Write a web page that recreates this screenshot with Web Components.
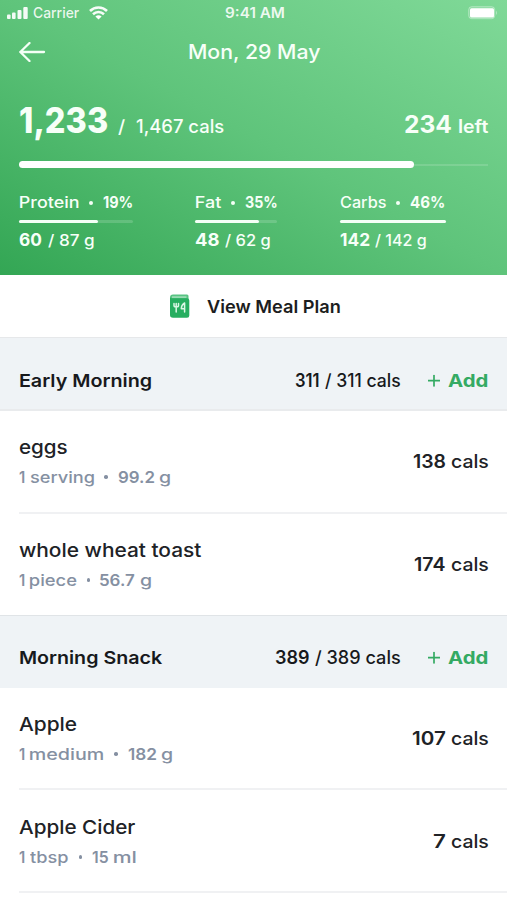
<!DOCTYPE html>
<html lang="en">
<head>
<meta charset="utf-8">
<title>Meal diary</title>
<style>
html,body{margin:0;padding:0;background:#fff}
body{width:507px;height:900px;overflow:hidden;font-family:Inter,"Liberation Sans",sans-serif;color:#17191c}
</style>
</head>
<body>
<diary-app></diary-app>
<script>
const define = (name, html, setup) => customElements.define(name, class extends HTMLElement {
  connectedCallback() {
    if (this.shadowRoot) return;
    const root = this.attachShadow({mode: 'open'});
    root.innerHTML = html(this);
    if (setup) setup(this, root);
  }
});
const a = (el, n, d = '') => el.getAttribute(n) ?? d;

/* One run of text, stretched so that its ink spans w pixels. g is the gap before it. */
const pen = document.createElement('canvas').getContext('2d');
define('fit-text', el => `<style>
:host{display:inline-block;flex:none;white-space:nowrap;width:${a(el,'w')}px;margin-left:${a(el,'g','0')}px;font-size:${a(el,'s','16')}px;font-weight:${a(el,'b','500')}}
span{display:inline-block;transform-origin:0 50%}
</style><span>${a(el,'t')}</span>`, (el, root) => {
  const c = getComputedStyle(el);
  pen.font = `${c.fontWeight} ${c.fontSize} ${c.fontFamily}`;
  const m = pen.measureText(a(el, 't'));
  const k = +a(el, 'w') / (m.actualBoundingBoxRight + m.actualBoundingBoxLeft);
  root.querySelector('span').style.transform = `scaleX(${k}) translateX(${m.actualBoundingBoxLeft}px)`;
});
const T = (t, w, s, b, g = 0) => `<fit-text t="${t}" w="${w}" s="${s}" b="${b}" g="${g}"></fit-text>`;

define('status-bar', () => `<style>
:host{display:grid;grid-template-columns:1fr auto 1fr;height:26px;line-height:26px;padding:0 9px 0 7px;align-items:center;color:rgba(255,255,255,.88)}
div{display:flex;align-items:center;height:26px}
.r{justify-content:flex-end}
svg{display:block;flex:none}
</style>
<div><svg width="21" height="12" viewBox="0 0 21 12" fill="#fff" fill-opacity=".93"><rect y="7.5" width="3.6" height="4.5" rx="1"/><rect x="5" y="5.5" width="3.6" height="6.5" rx="1"/><rect x="10.500" y="3" width="4" height="9" rx="1"/><rect x="16.300" y="0" width="4.4" height="12" rx="1"/></svg>
${T('Carrier',46.5,14.6,450,5)}
<svg style="margin-left:9px" width="19" height="14" viewBox="0 0 19 14" fill="none" stroke="#fff" stroke-opacity=".94" stroke-width="2.6"><path d="M1 5C5.7.4 13.300.4 18 5M4 8.300C7.200 5.300 11.800 5.300 15 8.300"/><path d="M9.500 13.600L6.400 10.500Q9.500 8 12.600 10.500Z" fill="#fff" stroke="none"/></svg></div>
${T('9:41 AM',59,14,600,3)}
<div class="r"><svg width="30" height="14" viewBox="0 0 30 14"><rect x=".7" y=".7" width="26" height="12" rx="3" fill="#fff" fill-opacity=".12" stroke="#fff" stroke-opacity=".36"/><rect x="2" y="2.200" width="24" height="9.200" rx="1.500" fill="#fff"/><path d="M28 4.500Q30 7 28 9Z" fill="#fff" fill-opacity=".4"/></svg></div>`);

define('macro-stat', el => {
  const [lt,lw,pt,pw,vt,vw,ut,uw,bar] = a(el,'data').split('|');
  return `<style>
:host{display:block;width:${a(el,'width')}px}
.l{display:flex;align-items:baseline;height:24px;line-height:24px}
.b{height:3px;margin:5px 0 5px;background:rgba(255,255,255,.16);border-radius:2px}
.b i{display:block;height:3px;border-radius:2px;background:#f4fff6;width:${bar}px}
.dot{flex:none;width:4px;height:4px;border-radius:50%;background:#f4fff6;margin:0 10px;align-self:center}
</style><div class="l">${T(lt,lw,15.6,500,a(el,'nudge','0'))}<span class="dot"></span>${T(pt,pw,15.6,700)}</div>
<div class="b"><i></i></div>
<div class="l">${T(vt,vw,17.6,700)}${T(ut,uw,15.6,500,5.5)}</div>`;
});

define('summary-header', () => `<style>
:host{display:block;height:275px;box-sizing:border-box;background:linear-gradient(to top right,#33a654,#5fc47b 50%,#80d998);color:#f7fff8}
nav{display:grid;grid-template-columns:1fr auto 1fr;height:52px;align-items:center;padding:0 19px;line-height:52px}
nav svg{display:block}
.t{display:flex;align-items:baseline;height:52px;line-height:52px;padding:17px 18.500px 0 19.700px}
.sp{flex:1}
.bar{display:flex;align-items:center;height:7px;margin:14px 19px 0}
.bar b{width:395px;height:7px;border-radius:4px;background:#fff}
.bar i{flex:1;height:2px;background:rgba(255,255,255,.14)}
.m{display:grid;grid-template-columns:176px 144.500px auto;padding:23px 19px 0}
</style>
<status-bar></status-bar>
<nav><svg width="27" height="20" viewBox="0 0 27 20" fill="none" stroke="#f4fff6" stroke-width="2.300" stroke-linecap="round" stroke-linejoin="round"><path d="M10.500 1L1.300 10l9.200 9M1.300 10H25"/></svg>${T('Mon, 29 May',132,20.3,500,2.6)}<span></span></nav>
<div class="t">${T('1,233',87,35.5,800)}${T('/',7.5,18,500,11.3)}${T('1,467 cals',87.5,18,500,10.5)}<span class="sp"></span>${T('234',46,23.6,700)}${T('left',30,18,600,8)}</div>
<div class="bar"><b></b><i></i></div>
<div class="m">
<macro-stat width="114" nudge="1" data="Protein|59|19%|29.500|60|23|/ 87 g|46|79"></macro-stat>
<macro-stat width="82" nudge="1" data="Fat|25|35%|32|48|24|/ 62 g|45|64"></macro-stat>
<macro-stat width="106" data="Carbs|46|46%|34.500|142|30|/ 142 g|51|106"></macro-stat>
</div>`);

define('meal-plan-link', () => `<style>
:host{display:flex;height:63px;box-sizing:border-box;padding-left:170px;align-items:center;border-bottom:1px solid #e6e8ea;background:#fff;line-height:32px;color:#1c1d20}
svg{flex:none}
fit-text{padding-top:2px}
</style><svg width="20" height="24" viewBox="0 0 20 24"><path d="M3 .5H17Q18.500.5 18.500 2V5H0V3.500Q0 .5 3 .5Z" fill="#59c383"/><path d="M2 2.600H16.500V3.500H2Z" fill="#d8f3e2"/><path d="M0 3.500Q.5 4.300 2 4.300H17Q19.300 4.300 19.300 6.500V21.500Q19.300 23.700 17 23.700H3Q0 23.700 0 21Z" fill="#27ae60"/><g fill="none" stroke="#dcf7e5" stroke-width="1.500" stroke-linecap="round" stroke-linejoin="round"><path d="M4 9.500V11.500Q4 13 6.200 13Q8.500 13 8.500 11.500V9.500M6.200 9.500V18M14.600 18V9Q11.300 11 11.300 14.700H14.600"/></g></svg>${T('View Meal Plan',133,17.6,600,17.2)}`);

define('meal-section', el => {
  const [t,w,n,nw,u,uw] = a(el,'data').split('|');
  return `<style>
:host{display:block}
header{display:flex;align-items:baseline;height:${a(el,'h')}px;box-sizing:border-box;border-bottom:${a(el,'line')}px solid #e9ebed;background:#eff3f6;padding:0 19px 0 20px;line-height:${a(el,'lh','85')}px;overflow:hidden}
.sp{flex:1}
.add{display:flex;align-items:baseline;color:#34aa63;margin-left:28px}
svg{width:12px;height:12px;margin-right:8px;transform:translateY(-.3px)}
</style><header>${T(t,w,17.7,600)}<span class="sp"></span>${T(n,nw,18,600)}${T(u,uw,18,450,6)}<span class="add"><svg viewBox="0 0 12 12"><path d="M6 0V12M0 6H12" stroke="#34aa63" stroke-width="1.700"/></svg>${T('Add',40,18,700)}</span></header><slot></slot>`;
});

define('food-row', el => {
  const [t,w,u,uw,n,nw,m,mw,c,cw] = a(el,'data').split('|');
  return `<style>
:host{display:flex;height:${a(el,'h')}px;box-sizing:border-box;margin-left:${19-a(el,'full','0')}px;padding:0 18.500px 0 ${a(el,'full','0')}px;border-bottom:${a(el,'line','2')}px solid ${a(el,'edge','#f0f1f3')};justify-content:space-between;color:#202226}
.n,.d,.c{display:flex;align-items:baseline}
.n{height:29px;line-height:30px;margin-top:${a(el,'top','22')}px}
.d{height:30px;line-height:30px;color:#8590a2}
.c{height:30px;line-height:30px;margin-top:${+a(el,'top','22')+13}px}
.dot{flex:none;width:3.500px;height:3.500px;border-radius:50%;background:#8590a2;margin:0 10.200px;align-self:center}
</style><div><div class="n">${T(t,w,18.9,500)}</div><div class="d">${T('1',5.5,16,600)}${T(u,uw,16,450,5.5)}<span class="dot"></span>${T(n,nw,16,600)}${T(m,mw,16,450,5)}</div></div>
<div class="c">${T(c,cw,18.6,600)}${T('cals',38,18.3,450,6)}</div>`;
});

define('diary-app', () => `<style>:host{display:block;width:507px;height:900px;overflow:hidden;background:#fff}</style>
<summary-header></summary-header>
<meal-plan-link></meal-plan-link>
<meal-section h="73" line="2" data="Early Morning|131|311|24|/ 311 cals|75">
<food-row h="103" data="eggs|48.500|serving|64|99.2|36|g|11|138|32"></food-row>
<food-row h="102" line="1" full="19" edge="#e0e4e7" data="whole wheat toast|183|piece|46.500|56.7|34.500|g|11|174|31"></food-row>
</meal-section>
<meal-section h="72" line="0" lh="83" data="Morning Snack|142|389|34|/ 389 cals|85">
<food-row h="102" data="Apple|58|medium|74|182|28|g|11|107|33"></food-row>
<food-row h="103" top="23" data="Apple Cider|116|tbsp|38.500|15|16.500|ml|21.500|7|12"></food-row>
</meal-section>`);
</script>
</body>
</html>
